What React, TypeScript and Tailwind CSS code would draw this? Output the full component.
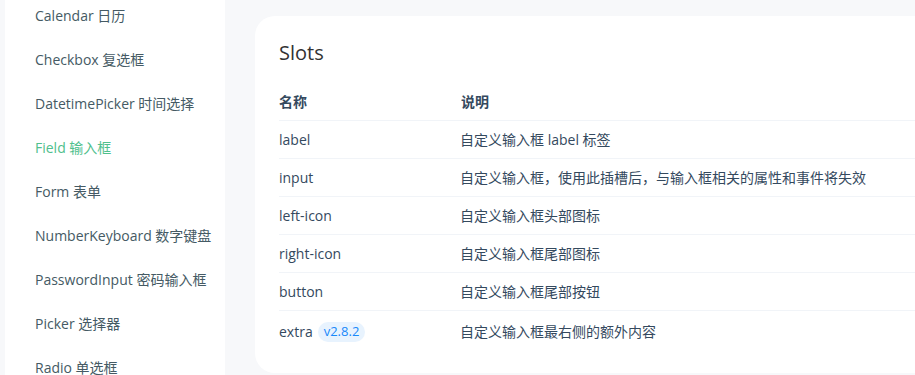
import React from 'react';

const navItems = [
  'Calendar 日历',
  'Checkbox 复选框',
  'DatetimePicker 时间选择',
  'Field 输入框',
  'Form 表单',
  'NumberKeyboard 数字键盘',
  'PasswordInput 密码输入框',
  'Picker 选择器',
  'Radio 单选框',
];

const slots: { name: string; desc: string; tag?: string }[] = [
  { name: 'label', desc: '自定义输入框 label 标签' },
  { name: 'input', desc: '自定义输入框，使用此插槽后，与输入框相关的属性和事件将失效' },
  { name: 'left-icon', desc: '自定义输入框头部图标' },
  { name: 'right-icon', desc: '自定义输入框尾部图标' },
  { name: 'button', desc: '自定义输入框尾部按钮' },
  { name: 'extra', desc: '自定义输入框最右侧的额外内容', tag: 'v2.8.2' },
];

const App: React.FC = () => {
  return (
    <div
      className="h-[375px] w-[915px] overflow-hidden bg-[#f7f8fa] flex"
      style={{ fontFamily: '"Open Sans", "Noto Sans CJK SC", sans-serif' }}
    >
      {/* Sidebar */}
      <div className="ml-[5px] w-[220px] shrink-0 bg-white">
        <div className="mt-[-7px] flex flex-col">
          {navItems.map((item) => (
            <div
              key={item}
              className={`h-[44px] pl-[30px] flex items-center text-[14px] ${
                item.startsWith('Field') ? 'text-[#4fc08d]' : 'text-[#455a64]'
              }`}
            >
              {item}
            </div>
          ))}
        </div>
      </div>

      {/* Content */}
      <div className="pl-[30px] pt-[16px]">
        <div className="w-[820px] h-[357px] bg-white rounded-[20px] px-[24px] pt-[24px]">
          <h3 className="text-[20px] leading-[26px] font-medium text-[#323233] mb-[17px]">Slots</h3>
          <div className="text-[14px] text-[#34495e]">
            <div className="h-[37px] flex items-center font-semibold">
              <div className="w-[182px]">名称</div>
              <div>说明</div>
            </div>
            {slots.map((s) => (
              <div
                key={s.name}
                className={`border-t border-[#f1f4f8] flex items-center ${s.tag ? 'h-[42px]' : 'h-[38px]'}`}
              >
                <div className="w-[181px] flex items-center">
                  <span>{s.name}</span>
                  {s.tag && (
                    <span className="ml-[5px] h-[20px] px-[6px] rounded-full bg-[#e8f3fe] text-[#1989fa] text-[13px] flex items-center">
                      {s.tag}
                    </span>
                  )}
                </div>
                <div>{s.desc}</div>
              </div>
            ))}
          </div>
        </div>
      </div>
    </div>
  );
};

export default App;
